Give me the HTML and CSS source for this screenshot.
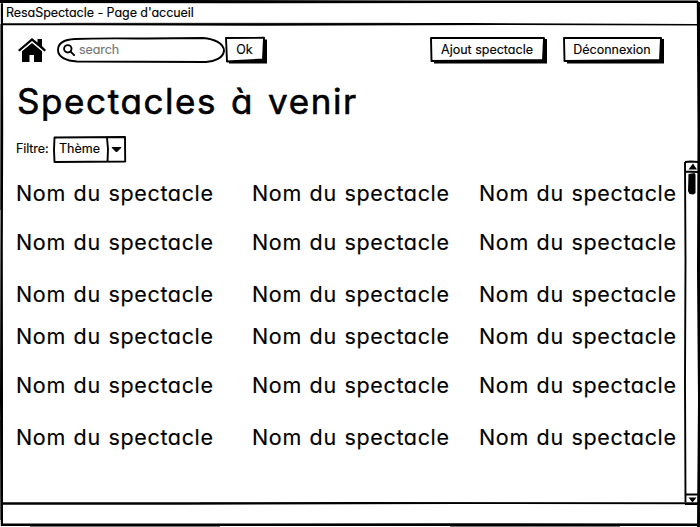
FILE: index.html
```html
<!DOCTYPE html>
<html lang="fr">
<head>
<meta charset="utf-8">
<title>ResaSpectacle - Page d'accueil</title>
<link rel="stylesheet" href="styles.css">
</head>
<body>
<div class="window">
  <header class="titlebar"><span class="t-title">ResaSpectacle - Page d'accueil</span></header>
  <main class="content">
    <div class="page">
      <nav class="toolbar">
        <svg class="home" viewBox="0 0 28 24"><path d="M0 12 14 0l5.500 4.500V1H24v7l4 4-1.500 1.600L14 3 1.500 13.600Z"/><path d="M4 13.200 14 5l10 8.200V24h-8v-7h-4.500v7H4Z"/></svg>
        <div class="search">
          <svg class="sketch" viewBox="0 0 168 26"><path d="M18 2C38 1 60 1.300 90 1.500L146 1C157 2 167 6 167 14C166 21 158 24.500 149 25L20 24.500C9 24 1 20 1 13C1 6 8 2.500 18 2Z"/></svg>
          <svg class="lens" viewBox="0 0 12 12"><circle cx="4.800" cy="4.800" r="3.700"/><path d="m7.600 7.600 3.500 3.500"/></svg>
          <span class="t-search">search</span>
        </div>
        <button class="btn ok"><svg class="sketch" viewBox="0 0 42 27"><path class="shade" d="M4 24 38 22V2.500h4V26.500H4Z"/><path class="face" d="M1 1 39 .800 38 22.500 2 24.500Z"/></svg><span class="t-ok">Ok</span></button>
        <button class="btn add"><svg class="sketch" viewBox="0 0 117 27"><path class="shade" d="M4 23.500 113 22.500V2h4V26.500H4Z"/><path class="face" d="M1 1 114 1 113 23 1.500 24Z"/></svg><span class="t-add">Ajout spectacle</span></button>
        <button class="btn out"><svg class="sketch" viewBox="0 0 101 27"><path class="shade" d="M4 23.500 97 22.500V2h4V26.500H4Z"/><path class="face" d="M1 1 98 1 97 23 1.500 24Z"/></svg><span class="t-out">Déconnexion</span></button>
      </nav>
      <h1><span class="t-h1">Spectacles à venir</span></h1>
      <div class="filter">
        <span class="t-filter">Filtre:</span>
        <div class="select">
          <svg class="sketch" viewBox="0 0 73 27"><path d="M1.500 1.500 72 1 72.200 25.500 1.500 26 1 14ZM54 1.500 55 13 54.500 26"/><path class="arrow" d="M59 11.500h9L63.500 16Z"/></svg>
          <span class="t-theme">Thème</span>
        </div>
      </div>
      <div class="shows">
        <span>Nom du spectacle</span><span>Nom du spectacle</span><span>Nom du spectacle</span>
        <span>Nom du spectacle</span><span>Nom du spectacle</span><span>Nom du spectacle</span>
        <span>Nom du spectacle</span><span>Nom du spectacle</span><span>Nom du spectacle</span>
        <span>Nom du spectacle</span><span>Nom du spectacle</span><span>Nom du spectacle</span>
        <span>Nom du spectacle</span><span>Nom du spectacle</span><span>Nom du spectacle</span>
        <span>Nom du spectacle</span><span>Nom du spectacle</span><span>Nom du spectacle</span>
      </div>
    </div>
    <svg class="scrollbar" viewBox="0 0 16 345"><path class="line" d="M1 2 7 1.500 14 2M1 2 1.500 100 1 220 1.500 344M1 11.500 14 12M1.500 334.500H14M1 344 14 344.500"/><path d="M4.500 9.500 9 3.500l4 6ZM4.500 337.500h8L8.500 342.500ZM4.500 14 10.500 13l1 1.500V33l-2 1.500-4-.500L4 31Z"/></svg>
  </main>
  <footer class="statusbar"></footer>
  <svg class="frame" viewBox="0 0 700 527">
    <path class="grey" d="M.500 24V210M.500 420V520M180 .800H698M699.500 20V150M30 526.200H220M450 526.200H620M200 503H700M60 23.500H400"/>
    <path d="M0 0H180L420 1 698 1V3L240 3.200 0 3ZM.800 0H3L3.200 130 2.800 250 3 400 3 526H.800L0 400 .500 220 1 90ZM2 23 230 23.300 470 23 698 24V25.500L500 25 260 25.700 2 25ZM696.800 1 700 2V527H697L698 400 697 270 697.500 130ZM2 502 130 502.300 360 502 698 502.500V504.300L460 504 180 504.700 2 504.500ZM1 523.200 250 523.600 450 523.300 700 523.500V526L480 526 220 526 1 525.800Z"/>
  </svg>
</div>
</body>
</html>
```
FILE: styles.css
```css
* { box-sizing: border-box; }
body { margin: 0; background: #fff; color: #000; font-family: Inter, "Liberation Sans", sans-serif; font-feature-settings: "cv11"; font-size: 12.5px; -webkit-text-stroke: .15px currentColor; }
.window { position: relative; width: 700px; height: 527px; display: flex; flex-direction: column; overflow: hidden; }
.frame { position: absolute; inset: 0; width: 700px; height: 527px; pointer-events: none; }
.frame .grey { fill: none; stroke: #777; stroke-width: 1.500; }
.titlebar { height: 25px; padding: 3px 6px 0; line-height: 20px; white-space: nowrap; letter-spacing: -.05px; }
.content { flex: 1; display: flex; min-height: 0; }
.statusbar { height: 23px; }
.page { width: 684px; padding: 12px 0 0 16px; }
.scrollbar { width: 16px; height: 345px; margin-top: 135px; }
.scrollbar .line { fill: none; stroke: #000; stroke-width: 1.900; }
.toolbar { display: flex; height: 27px; }
.home { width: 28px; height: 24px; margin: 1px 11px 0 2px; }
.search, .btn, .select { position: relative; display: flex; }
.sketch { position: absolute; inset: 0; width: 100%; height: 100%; overflow: visible; fill: none; stroke: #000; stroke-width: 1.900; stroke-linejoin: round; }
.search { width: 168px; height: 26px; align-items: center; padding-left: 6px; }
.lens { width: 12px; height: 12px; fill: none; stroke: #000; stroke-width: 1.900; stroke-linecap: round; margin-right: 4px; }
.t-search { color: #777; position: relative; top: -1px; letter-spacing: -.1px; }
.btn { height: 27px; padding: 0 3px 3px 0; border: 0; background: none; font: inherit; font-feature-settings: inherit; color: #000; align-items: center; justify-content: center; }
.btn span { position: relative; white-space: nowrap; }
.shade { fill: #000; stroke: none; }
.face { fill: #fff; }
.ok { width: 42px; }
.add { width: 117px; margin-left: 163px; }
.out { width: 101px; margin-left: 16px; }
h1 { margin: 15px 0 0 1px; height: 44px; line-height: 44px; font-size: 35px; font-weight: 400; white-space: nowrap; -webkit-text-stroke: .6px #000; }
.t-h1 { letter-spacing: 1.6px; word-spacing: 2.5px; }
.filter { display: flex; height: 27px; margin-top: 13px; }
.t-filter { width: 37px; line-height: 25px; white-space: nowrap; letter-spacing: -.1px; }
.select { width: 73px; height: 27px; padding-left: 6px; line-height: 25px; }
.select .arrow { fill: #000; stroke-width: 1; }
.shows { display: grid; grid-template-columns: 236px 227px 200px; grid-template-rows: 49px 52px 42px 49px 52px 42px; margin-top: 14px; font-size: 21.5px; line-height: 32px; white-space: nowrap; letter-spacing: .65px; word-spacing: 1px; }
```
